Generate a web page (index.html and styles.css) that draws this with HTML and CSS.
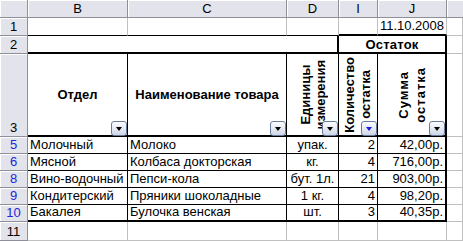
FILE: index.html
```html
<!DOCTYPE html>
<html lang="ru">
<head>
<meta charset="utf-8">
<title>Остаток</title>
<link rel="stylesheet" href="styles.css">
</head>
<body>
<div class="sheet">
  <div class="hd corner"></div>
  <div class="hd col">B</div>
  <div class="hd col">C</div>
  <div class="hd col">D</div>
  <div class="hd col">I</div>
  <div class="hd col">J</div>
  <div class="hd col lastcol"></div>

  <div class="hd rh">1</div>
  <div class="c r1"></div>
  <div class="c r1"></div>
  <div class="c r1"></div>
  <div class="c r1 boxtop"></div>
  <div class="c r1 boxtop right">11.10.2008</div>
  <div class="c"></div>

  <div class="hd rh">2</div>
  <div class="c r2 span3"></div>
  <div class="c r2 span2 title">Остаток</div>
  <div class="c"></div>

  <div class="hd rh">3</div>
  <div class="c h3">Отдел<span class="dd"></span></div>
  <div class="c h3">Наименование товара<span class="dd"></span></div>
  <div class="c h3"><div class="vt vd">Единицы<br>измерения</div><span class="dd"></span></div>
  <div class="c h3"><div class="vt vi">Количество<br>остатка</div><span class="dd on"></span></div>
  <div class="c h3 jr"><div class="vt vj">Сумма<br>остатка</div><span class="dd"></span></div>
  <div class="c"></div>

  <div class="hd rh blue">5</div>
  <div class="c d">Молочный</div>
  <div class="c d">Молоко</div>
  <div class="c d mid">упак.</div>
  <div class="c d right">2</div>
  <div class="c d right jr">42,00р.</div>
  <div class="c"></div>

  <div class="hd rh blue">6</div>
  <div class="c d">Мясной</div>
  <div class="c d">Колбаса докторская</div>
  <div class="c d mid">кг.</div>
  <div class="c d right">4</div>
  <div class="c d right jr">716,00р.</div>
  <div class="c"></div>

  <div class="hd rh blue">8</div>
  <div class="c d">Вино-водочный</div>
  <div class="c d">Пепси-кола</div>
  <div class="c d mid">бут. 1л.</div>
  <div class="c d right">21</div>
  <div class="c d right jr">903,00р.</div>
  <div class="c"></div>

  <div class="hd rh blue">9</div>
  <div class="c d">Кондитерский</div>
  <div class="c d">Пряники шоколадные</div>
  <div class="c d mid">1 кг.</div>
  <div class="c d right">4</div>
  <div class="c d right jr">98,20р.</div>
  <div class="c"></div>

  <div class="hd rh blue">10</div>
  <div class="c d lastrow">Бакалея</div>
  <div class="c d lastrow">Булочка венская</div>
  <div class="c d mid lastrow">шт.</div>
  <div class="c d right lastrow">3</div>
  <div class="c d right jr lastrow">40,35р.</div>
  <div class="c"></div>

  <div class="hd rh">11</div>
  <div class="c"></div>
  <div class="c"></div>
  <div class="c"></div>
  <div class="c"></div>
  <div class="c"></div>
  <div class="c"></div>
</div>
</body>
</html>
```
FILE: styles.css
```css
html, body {
  margin: 0;
  padding: 0;
  background: #ffffff;
}
body {
  font-family: "Liberation Sans", Arial, sans-serif;
  font-size: 13px;
  color: #000;
}
.sheet {
  display: grid;
  grid-template-columns: 28px 100px 159px 52px 39px 69px 1fr;
  grid-template-rows: 18px 18px 18px 83px repeat(5, 17px) 1fr;
  width: 463px;
  height: 241px;
  overflow: hidden;
}
.sheet > div {
  box-sizing: border-box;
  min-width: 0;
  white-space: nowrap;
  display: flex;
  align-items: flex-end;
  padding: 0 2px 1px;
  line-height: 15px;
  border-right: 1px solid #c0c0c0;
  border-bottom: 1px solid #c0c0c0;
}
.sheet > .hd {
  background: #e3e3eb;
  border-right: 1px solid #8f8f99;
  border-bottom: 1px solid #8f8f99;
  justify-content: center;
  align-items: center;
  padding: 0;
  box-shadow: inset 1px 1px 0 #ffffff;
}
.sheet > .lastcol { border-right: none; }
.sheet > .rh { align-items: flex-end; padding-bottom: 1px; }
.blue { color: #2525d8; }
.sheet > .r1 { border-bottom: 1px solid #000; }
.sheet > .boxtop { border-bottom: 2px solid #000; }
.sheet > .r1.right { border-right: 1px solid #c0c0c0; }
.right { justify-content: flex-end; }
.mid { justify-content: center; }
.sheet > .r2 {
  border-bottom: 2px solid #000;
  border-right: 2px solid #000;
}
.span3 { grid-column: span 3; }
.span2 { grid-column: span 2; }
.sheet > .title {
  justify-content: center;
  align-items: center;
  font-weight: bold;
  padding: 0;
  letter-spacing: 0.2px;
}
.sheet > .h3 {
  position: relative;
  justify-content: center;
  align-items: center;
  font-weight: bold;
  border-right: 1px solid #000;
  border-bottom: 2px solid #000;
  padding: 0;
}
.sheet > .d {
  border-right: 1px solid #000;
  border-bottom: 1px solid #000;
}
.sheet > .jr { border-right: 2px solid #000; }
.sheet > .lastrow { border-bottom: 2px solid #000; }
.vt {
  writing-mode: vertical-rl;
  transform: rotate(180deg);
  text-align: center;
  white-space: nowrap;
}
.vd { line-height: 15px; }
.vi { line-height: 16px; }
.vj { line-height: 17px; letter-spacing: 1px; }
.dd {
  position: absolute;
  right: 0;
  bottom: -1px;
  width: 16px;
  height: 15px;
  box-sizing: border-box;
  border: 1px solid #6a7c9c;
  border-radius: 3px;
  background: linear-gradient(#fbfcfe, #d0d8e6);
}
.dd::after {
  content: "";
  position: absolute;
  left: 4px;
  top: 5px;
  width: 0;
  height: 0;
  border-left: 3.5px solid transparent;
  border-right: 3.5px solid transparent;
  border-top: 4px solid #000;
}
.dd.on::after { border-top-color: #1a1ae0; }
```
